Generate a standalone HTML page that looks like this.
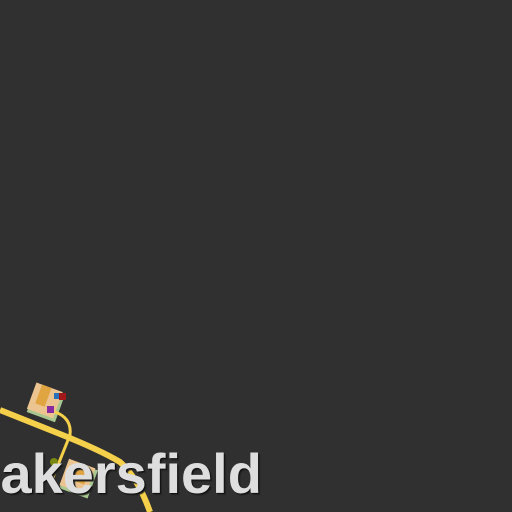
<!DOCTYPE html><html><head><style>html,body{margin:0;width:512px;height:512px;overflow:hidden}body{background:#303030;position:relative}
.w{position:absolute;left:0;top:0;width:512px;height:512px;overflow:hidden}
.t{position:absolute;left:-40px;top:441px;font:bold 56px "Liberation Sans",sans-serif;color:#dedede;text-shadow:1px 1px 0 #111,2px 2px 1px #222;white-space:nowrap}</style></head><body><div class="w">
<svg width="512" height="512" style="position:absolute;left:0;top:0">
<g transform="rotate(20 46 403)"><rect x="31" y="388" width="30" height="30" fill="#a8c890"/><rect x="30" y="387" width="28" height="28" fill="#ecc490"/><rect x="36" y="387" width="10" height="20" fill="#e0a440"/></g>
<g transform="rotate(20 78 478)"><rect x="64" y="464" width="30" height="30" fill="#a8c890"/><rect x="63" y="463" width="28" height="28" fill="#ecc490"/><rect x="72" y="466" width="14" height="16" fill="#e0a440"/></g>
<path d="M55 412 Q72 418 70 435 L52 480" stroke="#f5d04a" stroke-width="3" fill="none"/>
<path d="M0 410 L60 434 Q100 450 120 462 Q138 478 150 512" stroke="#f5d04a" stroke-width="6" fill="none"/>
<rect x="54" y="393" width="6" height="6" fill="#2a70b8"/><rect x="59" y="393" width="7" height="7" fill="#a01818"/>
<rect x="47" y="406" width="7" height="7" fill="#8a2aa0"/>
<circle cx="54" cy="462" r="4" fill="#7a8a10"/>
</svg>
<div class="t">Bakersfield</div></div>
</body></html>
